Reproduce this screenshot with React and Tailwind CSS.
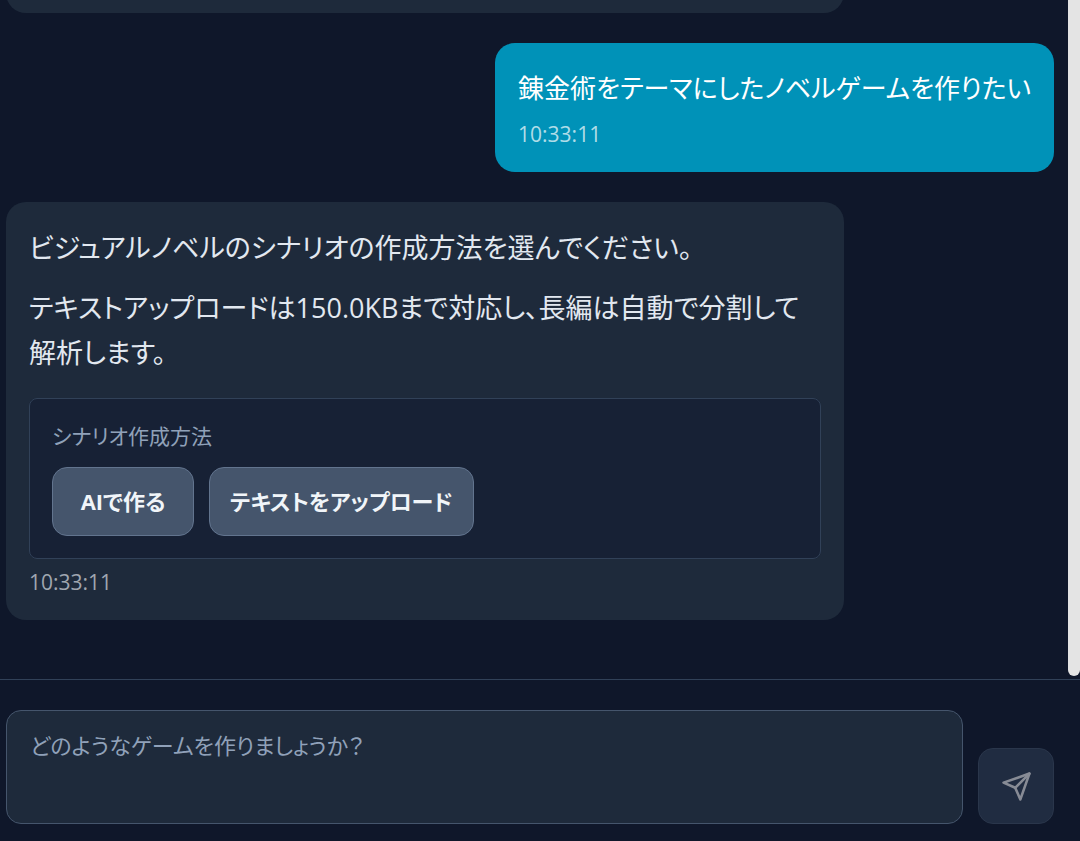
import { clsx } from "clsx";

const OPTIONS = ["AIで作る", "テキストをアップロード"];

function SendIcon() {
  return (
    <svg
      viewBox="0 0 24 24"
      className="size-[31px]"
      fill="none"
      stroke="currentColor"
      strokeWidth="2"
      strokeLinecap="round"
      strokeLinejoin="round"
      aria-hidden="true"
    >
      <path d="M22 2 11 13" />
      <path d="m22 2-7 20-4-9-9-4 20-7z" />
    </svg>
  );
}

function Message({ from, time, children }) {
  const isUser = from === "user";

  return (
    <div className={clsx("flex shrink-0", isUser ? "justify-end" : "justify-start")}>
      <div
        className={clsx(
          "rounded-[20px] p-[23px] leading-[45px]",
          isUser
            ? "max-w-4/5 bg-cyan-600 text-[26px] text-white"
            : "w-4/5 bg-[#1e2a3b] text-[27px] text-slate-200",
        )}
      >
        <div className="space-y-[15px]">{children}</div>
        <time
          className={clsx(
            "mt-2 block text-[21px] leading-[30px]",
            isUser ? "text-white/70" : "text-[#a0a6b0]",
          )}
        >
          {time}
        </time>
      </div>
    </div>
  );
}

function ScenarioChoice() {
  return (
    <fieldset className="mt-[23px] rounded-lg border border-slate-700 bg-[#172135] p-[22px]">
      <p className="text-[21px] leading-[30px] text-slate-400">シナリオ作成方法</p>
      <div className="mt-4 flex flex-wrap gap-[15px]">
        {OPTIONS.map((label) => (
          <button
            key={label}
            type="button"
            className="min-w-[142px] rounded-[15px] border border-slate-500 bg-slate-600 px-5 py-[14px] text-[22px] leading-[39px] font-bold text-slate-100"
          >
            {label}
          </button>
        ))}
      </div>
    </fieldset>
  );
}

export default function App() {
  return (
    <div className="flex h-screen flex-col bg-[#0f172a] font-['Open_Sans','Noto_Sans_CJK_JP',sans-serif] [font-feature-settings:'palt']">
      <main className="flex min-h-0 flex-1">
        <div className="flex min-w-0 flex-1 flex-col justify-end gap-[30px] overflow-hidden pr-[14px] pb-[59px] pl-[6px]">
          <div className="h-24 w-4/5 shrink-0 rounded-[20px] bg-[#1e2a3b]" />

          <Message from="user" time="10:33:11">
            <p>錬金術をテーマにしたノベルゲームを作りたい</p>
          </Message>

          <Message from="assistant" time="10:33:11">
            <p>ビジュアルノベルのシナリオの作成方法を選んでください。</p>
            <p>テキストアップロードは150.0KBまで対応し、長編は自動で分割して解析します。</p>
            <ScenarioChoice />
          </Message>
        </div>
        <div className="mb-[3px] w-3 shrink-0 rounded-b-md bg-[#e4e4e4]" />
      </main>

      <form
        className="flex items-end gap-[15px] border-t border-slate-700 pt-[30px] pr-[26px] pb-[17px] pl-[6px]"
        onSubmit={(e) => e.preventDefault()}
      >
        <textarea
          rows={2}
          aria-label="メッセージ"
          placeholder="どのようなゲームを作りましょうか？"
          className="block min-w-0 flex-1 resize-none overflow-hidden rounded-[15px] border border-slate-600 bg-[#1e2a3b] px-[23px] pt-[15px] pb-[19px] text-[22px] leading-[39px] text-slate-200 outline-none placeholder:text-slate-400"
        />
        <button
          type="submit"
          disabled
          aria-label="送信"
          className="flex size-[76px] shrink-0 items-center justify-center rounded-[15px] border border-slate-600 bg-slate-700 text-white opacity-50"
        >
          <SendIcon />
        </button>
      </form>
    </div>
  );
}
